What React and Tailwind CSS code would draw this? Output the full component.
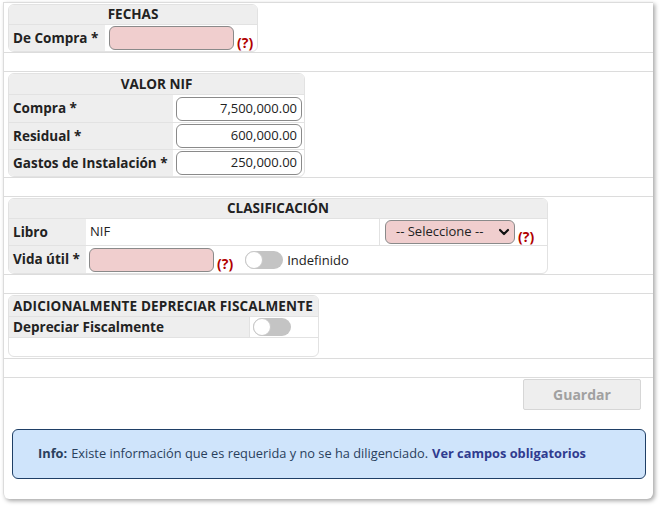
import React from "react";

const Q = () => (
  <span className="text-[#b00000] font-bold text-[14px] self-end leading-none mb-[1px]">(?)</span>
);

const Toggle = () => (
  <span className="relative inline-block w-[38px] h-[18px] rounded-full bg-[#c4c4c4]">
    <span className="absolute left-0 top-0 w-[18px] h-[18px] rounded-full bg-white border border-[#c8c8c8]" />
  </span>
);

const PinkInput = ({ w }) => (
  <div className={`${w} h-[24px] rounded-[6px] border border-[#8a8a8a] bg-[#f0cece]`} />
);

const NumInput = ({ v }) => (
  <div className="w-[126px] h-[24px] rounded-[6px] border border-[#8a8a8a] bg-white flex items-center justify-end pr-[4px] text-[13px] text-[#222]">
    {v}
  </div>
);

export default function App() {
  return (
    <div className="w-[660px] h-[507px] bg-white" style={{ fontFamily: '"Open Sans", "Noto Sans", sans-serif' }}>
      <div className="ml-[3px] mt-[2px] w-[650px] h-[497px] border-l border-t border-[#dcdcdc] rounded-br-[6px] rounded-bl-[6px] shadow-[2px_2px_4px_rgba(0,0,0,0.35)] flex flex-col text-[13px] text-[#222]">
        {/* FECHAS */}
        <div className="h-[50px] border-b border-[#dcdcdc] pl-[4px] pt-px">
          <div className="w-[250px] border border-[#e2e2e2] rounded-[6px] overflow-hidden">
            <div className="h-[20px] bg-[#eeeeee] flex items-center justify-center font-bold text-[13.5px] border-b border-[#e2e2e2]">FECHAS</div>
            <div className="flex h-[26px]">
              <div className="w-[96px] bg-[#eeeeee] flex items-center pl-[4px] font-bold text-[13.5px]">De Compra *</div>
              <div className="flex-1 flex items-center pl-[4px] gap-[3px]">
                <PinkInput w="w-[125px]" />
                <Q />
              </div>
            </div>
          </div>
        </div>
        <div className="h-[19px] border-b border-[#dcdcdc]" />

        {/* VALOR NIF */}
        <div className="h-[106px] border-b border-[#dcdcdc] pl-[4px] pt-px">
          <div className="w-[297px] border border-[#e2e2e2] rounded-[6px] overflow-hidden">
            <div className="h-[21px] bg-[#eeeeee] flex items-center justify-center font-bold text-[13.5px] border-b border-[#e2e2e2]">VALOR NIF</div>
            {[
              ["Compra *", "7,500,000.00"],
              ["Residual *", "600,000.00"],
              ["Gastos de Instalación *", "250,000.00"],
            ].map(([l, v], i) => (
              <div key={l} className={`flex h-[27px] ${i > 0 ? "border-t border-[#e2e2e2]" : ""}`}>
                <div className="w-[164px] bg-[#eeeeee] flex items-center pl-[4px] font-bold text-[13.5px]">{l}</div>
                <div className="flex-1 flex items-center pl-[3px]">
                  <NumInput v={v} />
                </div>
              </div>
            ))}
          </div>
        </div>
        <div className="h-[19px] border-b border-[#dcdcdc]" />

        {/* CLASIFICACION */}
        <div className="h-[78px] border-b border-[#dcdcdc] pl-[4px] pt-px">
          <div className="w-[540px] border border-[#e2e2e2] rounded-[6px] overflow-hidden">
            <div className="h-[20px] bg-[#eeeeee] flex items-center justify-center font-bold text-[13.5px] border-b border-[#e2e2e2]">CLASIFICACIÓN</div>
            <div className="flex h-[27px] border-b border-[#e2e2e2]">
              <div className="w-[77px] bg-[#eeeeee] flex items-center pl-[4px] font-bold text-[13.5px]">Libro</div>
              <div className="w-[294px] flex items-center pl-[4px] border-r border-[#e2e2e2]">NIF</div>
              <div className="flex-1 flex items-center pl-[5px] gap-[3px]">
                <div className="w-[130px] h-[24px] rounded-[6px] border border-[#8a8a8a] bg-[#f0cece] flex items-center justify-between pl-[10px] pr-[4px] text-[#222]">
                  <span>-- Seleccione --</span>
                  <svg width="12" height="12" viewBox="0 0 12 12">
                    <path d="M2 4 L6 8 L10 4" stroke="#111" strokeWidth="2.2" fill="none" strokeLinecap="round" strokeLinejoin="round" />
                  </svg>
                </div>
                <Q />
              </div>
            </div>
            <div className="flex h-[27px]">
              <div className="w-[77px] bg-[#eeeeee] flex items-center pl-[4px] font-bold text-[13.5px]">Vida útil *</div>
              <div className="flex-1 flex items-center pl-[3px]">
                <PinkInput w="w-[125px]" />
                <span className="ml-[3px] flex h-[24px] items-end"><Q /></span>
                <span className="ml-[12px] flex items-center"><Toggle /></span>
                <span className="ml-[4px] mt-[3px]">Indefinido</span>
              </div>
            </div>
          </div>
        </div>
        <div className="h-[19px] border-b border-[#dcdcdc]" />

        {/* ADICIONALMENTE */}
        <div className="h-[65px] border-b border-[#dcdcdc] pl-[4px] pt-px">
          <div className="w-[311px] border border-[#e2e2e2] rounded-[6px] overflow-hidden">
            <div className="h-[21px] bg-[#eeeeee] flex items-center pl-[4px] font-bold text-[13.5px] tracking-[0.15px] border-b border-[#e2e2e2] whitespace-nowrap">ADICIONALMENTE DEPRECIAR FISCALMENTE</div>
            <div className="flex h-[21px] border-b border-[#e2e2e2]">
              <div className="w-[240px] bg-[#eeeeee] flex items-center pl-[4px] font-bold text-[13.5px]">Depreciar Fiscalmente</div>
              <div className="flex-1 flex items-center pl-[3px] border-l border-[#e2e2e2]">
                <Toggle />
              </div>
            </div>
            <div className="h-[18px]" />
          </div>
        </div>
        <div className="h-[19px] border-b border-[#dcdcdc]" />

        {/* Footer */}
        <div className="flex flex-col pt-[1px]">
          <div className="flex justify-end pr-[12px]">
            <div className="w-[118px] h-[31px] bg-[#eeeeee] border border-[#d6d6d6] rounded-[2px] flex items-center justify-center font-bold text-[14px] text-[#a0a0a0]">Guardar</div>
          </div>
          <div className="mt-[19px] ml-[8px] w-[634px] h-[50px] rounded-[6px] border border-[#1f3f66] bg-[#cfe4fb] flex items-center pl-[25px] text-[12.8px] text-[#2a3f5c]">
            <span className="font-bold">Info:</span>
            <span className="ml-[4px]">Existe información que es requerida y no se ha diligenciado.</span>
            <span className="ml-[4px] font-bold text-[#2f3b8f]">Ver campos obligatorios</span>
          </div>
        </div>
      </div>
    </div>
  );
}
